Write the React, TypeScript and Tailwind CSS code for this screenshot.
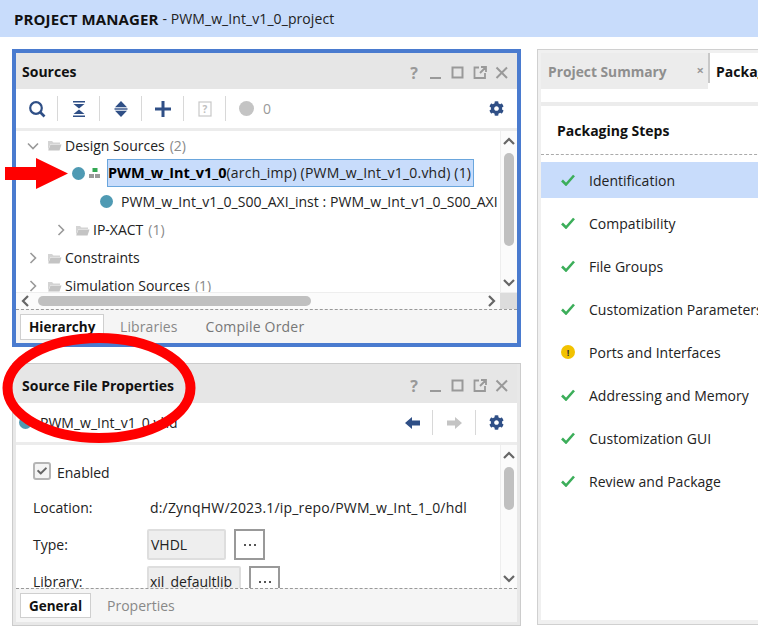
import React from "react";
import { FaCog } from "react-icons/fa";
import { FaCheck } from "react-icons/fa";

const font = { fontFamily: '"Open Sans","Noto Sans",sans-serif' };

function WindowButtons({ low }: { low?: boolean }) {
  return (
    <div className={`flex items-center gap-[4px] mr-[6px] ${low ? "mt-[5px]" : "mt-[3px]"}`}>
      <span className="w-[18px] text-center text-[16px] font-bold text-[#999] leading-none">?</span>
      <svg width="18" height="18" viewBox="0 0 18 18"><rect x="3" y="13" width="11" height="2" fill="#999" /></svg>
      <svg width="18" height="18" viewBox="0 0 18 18"><rect x="3.5" y="3.5" width="10" height="10" fill="none" stroke="#999" strokeWidth="2" /></svg>
      <svg width="18" height="18" viewBox="0 0 18 18"><path d="M8 3.5H3.5V14H14V9M10 3h5v5M15 3L9 9" fill="none" stroke="#999" strokeWidth="1.8" /></svg>
      <svg width="18" height="18" viewBox="0 0 18 18"><path d="M3.5 3.5L14 14M14 3.5L3.5 14" fill="none" stroke="#999" strokeWidth="2" /></svg>
    </div>
  );
}

function Sep() {
  return <div className="w-px h-[25px] bg-[#d8d8d8]" />;
}

function Cell({ children }: { children: React.ReactNode }) {
  return <div className="w-[41px] flex justify-center items-center h-[25px]">{children}</div>;
}

function Folder() {
  return (
    <svg width="15" height="13" viewBox="0 0 15 13" className="shrink-0">
      <path d="M1 2h4l1.5 1.5H13V5H3.5L1 11z" fill="#d4d4d4" />
      <path d="M3.5 5.5H14.5L12.5 11.5H1.2z" fill="#c4c4c4" />
    </svg>
  );
}

function Chevron({ down }: { down?: boolean }) {
  return (
    <svg width="12" height="12" viewBox="0 0 12 12" className="shrink-0">
      <path d={down ? "M1 3.5l5 5 5-5" : "M3.5 1l5 5-5 5"} fill="none" stroke="#999" strokeWidth="1.6" />
    </svg>
  );
}

function Row({ indent, down, label, count, h = 28 }: { indent: number; down?: boolean; label: string; count: string; h?: number }) {
  return (
    <div className="flex items-center shrink-0 whitespace-nowrap" style={{ paddingLeft: indent, height: h }}>
      <Chevron down={down} />
      <span className="ml-[8px] flex"><Folder /></span>
      <span className="ml-[3px] text-[#222]">{label}</span>
      <span className="ml-[5px] text-[#8a8a8a]">{count}</span>
    </div>
  );
}

function ScrollArrow({ dir }: { dir: "up" | "down" | "left" | "right" }) {
  const d = { up: "M2 9l5-5 5 5", down: "M2 5l5 5 5-5", left: "M9 2L4 7l5 5", right: "M5 2l5 5-5 5" }[dir];
  return (
    <svg width="14" height="14" viewBox="0 0 14 14" className="shrink-0">
      <path d={d} fill="none" stroke="#666" strokeWidth="2.2" />
    </svg>
  );
}

function VScroll({ thumbH, trackH }: { thumbH: number; trackH: number }) {
  return (
    <div className="w-[17px] shrink-0 border-l border-[#eeeeee] bg-[#fbfbfb] flex flex-col items-center" style={{ height: trackH }}>
      <div className="h-[21px] flex items-center"><ScrollArrow dir="up" /></div>
      <div className="flex-1 w-full flex flex-col items-center pt-[1px]">
        <div className="w-[10px] rounded-full bg-[#c0c0c0]" style={{ height: thumbH }} />
      </div>
      <div className="h-[21px] flex items-center"><ScrollArrow dir="down" /></div>
    </div>
  );
}

function Dot() {
  return <div className="w-[13px] h-[13px] rounded-full bg-[#4f9ab3] shrink-0" />;
}

function Dots() {
  return (
    <div className="w-[31px] h-[31px] border-2 border-[#999] flex items-center justify-center gap-[3px] shrink-0">
      <i className="w-[2px] h-[2px] bg-[#555]" />
      <i className="w-[2px] h-[2px] bg-[#555]" />
      <i className="w-[2px] h-[2px] bg-[#555]" />
    </div>
  );
}

function SourcesPanel() {
  return (
    <div className="h-[298px] border-[4px] border-[#4a7bcf] flex flex-col">
      <div className="h-[36px] bg-[#e6e6e6] flex items-center justify-between pl-[6px] shrink-0">
        <span className="font-bold text-[#111] text-[14px] pt-[1px]">Sources</span>
        <WindowButtons />
      </div>
      <div className="h-[39px] flex items-center shrink-0">
        <Cell>
          <svg width="18" height="18" viewBox="0 0 18 18"><circle cx="8" cy="8" r="5.8" fill="none" stroke="#2f4f86" strokeWidth="2.2" /><path d="M12 12l4.5 4.5" stroke="#2f4f86" strokeWidth="2.6" /></svg>
        </Cell>
        <Sep />
        <Cell>
          <svg width="14" height="16" viewBox="0 0 14 16"><path d="M1 0h12v1.4H1zM1.5 3h11L7 7.5zM1.5 13h11L7 8.5zM1 14.6h12V16H1z" fill="#2f4f86" /></svg>
        </Cell>
        <Sep />
        <Cell>
          <svg width="14" height="16" viewBox="0 0 14 16"><path d="M7 0l6 6.3H1zM7 16l6-6.3H1z" fill="#2f4f86" /><rect x="0.5" y="7.3" width="13" height="1.4" fill="#2f4f86" /></svg>
        </Cell>
        <Sep />
        <Cell>
          <svg width="16" height="16" viewBox="0 0 16 16"><path d="M6.5 0h3v6.5H16v3H9.5V16h-3V9.5H0v-3h6.5z" fill="#2f4f86" /></svg>
        </Cell>
        <Sep />
        <Cell>
          <svg width="14" height="16" viewBox="0 0 14 16"><rect x="1" y="1" width="12" height="14" fill="none" stroke="#c8c8c8" strokeWidth="1.2" /><text x="7" y="12" fontSize="10" fontWeight="700" textAnchor="middle" fill="#c0c0c0">?</text></svg>
        </Cell>
        <Sep />
        <Cell>
          <div className="w-[15px] h-[15px] rounded-full bg-[#c4c4c4]" />
        </Cell>
        <span className="text-[#999] -ml-[4px]">0</span>
        <div className="flex-1" />
        <div className="w-[41px] flex justify-center"><FaCog size={15} color="#2f4f86" /></div>
      </div>
      <div className="h-[3px] bg-[#ececec] shrink-0" />
      <div className="flex h-[161px] shrink-0">
        <div className="flex-1 min-w-0 overflow-hidden flex flex-col pt-[1px]">
          <Row indent={11} down label="Design Sources" count="(2)" h={27} />
          <div className="h-[28px] flex items-center shrink-0 whitespace-nowrap pl-[56px]">
            <Dot />
            <svg width="12" height="11" viewBox="0 0 12 11" className="ml-[4px] shrink-0">
              <rect x="3.5" y="0" width="5" height="4" fill="#34a853" />
              <rect x="0" y="6" width="5" height="4" fill="#9a9a9a" />
              <rect x="6" y="6" width="5" height="4" fill="#9a9a9a" />
            </svg>
            <div className="ml-[6px] h-[28px] border border-[#6aa6dd] bg-[#c8dcfb] flex items-center w-[367px] overflow-hidden">
              <span className="font-bold text-[#000] text-[14.5px]">PWM_w_Int_v1_0</span>
              <span className="text-[#222] tracking-[0.2px]">(arch_imp) (PWM_w_Int_v1_0.vhd) (1)</span>
            </div>
          </div>
          <div className="h-[29px] flex items-center shrink-0 whitespace-nowrap pl-[84px] overflow-hidden">
            <Dot />
            <span className="ml-[8px] text-[#222] tracking-[0.05px]">PWM_w_Int_v1_0_S00_AXI_inst : PWM_w_Int_v1_0_S00_AXI</span>
          </div>
          <Row indent={39} label="IP-XACT" count="(1)" />
          <Row indent={11} label="Constraints" count="" />
          <Row indent={11} label="Simulation Sources" count="(1)" />
        </div>
        <VScroll thumbH={93} trackH={161} />
      </div>
      <div className="h-[17px] shrink-0 flex items-center bg-[#fbfbfb] border-t border-[#eeeeee]">
        <div className="w-[19px] flex justify-center"><ScrollArrow dir="left" /></div>
        <div className="w-[273px] h-[10px] rounded-full bg-[#c0c0c0] ml-[3px]" />
        <div className="flex-1" />
        <div className="mr-[2px]"><ScrollArrow dir="right" /></div>
        <div className="w-[17px] h-full bg-[#dcdcdc]" />
      </div>
      <div className="flex-1 bg-[#f5f5f5] border-t border-dashed border-[#999] flex items-center pl-[4px]">
        <div className="h-[26px] w-[84px] pl-[8px] bg-white border border-[#cfcfcf] flex items-center font-bold text-[#111] text-[13.5px]">Hierarchy</div>
        <div className="ml-[16px] text-[#888] tracking-[0.1px]">Libraries</div>
        <div className="ml-[28px] text-[#777] tracking-[0.2px]">Compile Order</div>
      </div>
    </div>
  );
}

function PropertiesPanel() {
  return (
    <div className="h-[263px] border border-[#cccccc]">
      <div className="h-full border-[3px] border-t-0 border-[#e8e8e8] flex flex-col">
        <div className="h-[39px] bg-[#e6e6e6] flex items-center justify-between pl-[6px] shrink-0">
          <span className="font-bold text-[#111] text-[14px] pt-[4px]">Source File Properties</span>
          <WindowButtons low />
        </div>
        <div className="h-[39px] flex items-center shrink-0 pl-[3px]">
          <Dot />
          <span className="ml-[8px] text-[#222] whitespace-nowrap">PWM_w_Int_v1_0.vhd</span>
          <div className="flex-1" />
          <svg width="16" height="12" viewBox="0 0 16 12"><path d="M7 0v3.5h8v5H7V12L0 6z" fill="#2f4f86" /></svg>
          <div className="w-[11px]" />
          <Sep />
          <div className="w-[13px]" />
          <svg width="16" height="12" viewBox="0 0 16 12"><path d="M9 0v3.5H1v5h8V12l7-6z" fill="#c4c4c4" /></svg>
          <div className="w-[13px]" />
          <Sep />
          <div className="w-[13px]" />
          <FaCog size={15} color="#2f4f86" />
          <div className="w-[13px]" />
        </div>
        <div className="h-[3px] bg-[#ececec] shrink-0" />
        <div className="h-[143px] flex shrink-0">
          <div className="flex-1 min-w-0 overflow-hidden pl-[17px] flex flex-col">
            <div className="h-[18px] mt-[17px] flex items-center shrink-0">
              <div className="w-[18px] h-[18px] rounded-[3px] border-2 border-[#b5b5b5] bg-[#f4f4f4] flex items-center justify-center">
                <FaCheck size={10} color="#666" />
              </div>
              <span className="ml-[6px] text-[#222] pt-[3px]">Enabled</span>
            </div>
            <div className="mt-[18px] h-[20px] flex items-center shrink-0 whitespace-nowrap">
              <span className="w-[117px] text-[#222]">Location:</span>
              <span className="text-[#222] tracking-[0.18px]">d:/ZynqHW/2023.1/ip_repo/PWM_w_Int_1_0/hdl</span>
            </div>
            <div className="mt-[11px] h-[31px] flex items-center shrink-0">
              <span className="w-[114px] text-[#222]">Type:</span>
              <div className="w-[79px] h-[31px] bg-[#eeeeee] border-2 border-[#dedede] rounded-[2px] flex items-center pl-[2px] text-[#222]">VHDL</div>
              <div className="ml-[8px]"><Dots /></div>
            </div>
            <div className="mt-[6px] h-[31px] flex items-center shrink-0">
              <span className="w-[114px] text-[#222]">Library:</span>
              <div className="w-[94px] h-[31px] bg-[#eeeeee] border-2 border-[#dedede] rounded-[2px] flex items-center pl-[1px] text-[#222] whitespace-nowrap">xil_defaultlib</div>
              <div className="ml-[8px]"><Dots /></div>
            </div>
          </div>
          <VScroll thumbH={43} trackH={143} />
        </div>
        <div className="flex-1 bg-[#f5f5f5] border-t border-dashed border-[#999] flex items-center pl-[4px]">
          <div className="h-[25px] w-[71px] pl-[8px] bg-white border border-[#cfcfcf] flex items-center font-bold text-[#111] text-[13.5px]">General</div>
          <div className="ml-[16px] text-[#888]">Properties</div>
        </div>
      </div>
    </div>
  );
}

function Step({ label, active, warn }: { label: string; active?: boolean; warn?: boolean }) {
  return (
    <div className={`h-[36px] flex items-center whitespace-nowrap pl-[20px] pt-[2px] ${active ? "bg-[#c8dcfb]" : ""}`}>
      {warn ? (
        <div className="w-[14px] h-[14px] rounded-full bg-[#f2c200] flex items-center justify-center text-[9px] font-bold text-[#333] leading-none -mt-[2px]">!</div>
      ) : (
        <svg width="14" height="12" viewBox="0 0 14 12" className="-mt-[3px]"><path d="M1 6.5l4 4L13 1.5" fill="none" stroke="#3cae5a" strokeWidth="2.6" /></svg>
      )}
      <span className="ml-[14px] text-[#222] tracking-[0.02px]">{label}</span>
    </div>
  );
}

function RightPanel() {
  return (
    <div className="w-[230px] shrink-0 h-[576px] border-l border-t border-b border-[#d0d0d0] bg-[#f0f0f0] pl-[3px] pt-[3px] pb-[4px] flex flex-col overflow-hidden">
      <div className="h-[36px] flex shrink-0 bg-white">
        <div className="w-[167px] bg-[#ececec] flex items-center pl-[7px] pt-[2px] font-bold text-[#8f8f8f] text-[13.8px] whitespace-nowrap relative">
          Project Summary
          <span className="absolute right-[4px] top-[11px] text-[#999] text-[13px] leading-none">×</span>
        </div>
        <div className="w-[2px] bg-[#c8c8c8] h-[30px]" />
        <div className="flex-1 pl-[6px] pt-[2px] font-bold text-[#111] text-[14px] flex items-center whitespace-nowrap overflow-hidden">Packaging</div>
      </div>
      <div className="h-[13px] bg-white shrink-0" />
      <div className="h-[4px] bg-[#ececec] shrink-0" />
      <div className="flex-1 bg-white flex flex-col">
        <div className="h-[49px] flex items-center pl-[16px] pt-[2px] font-bold text-[#111] text-[14px] border-b border-dashed border-[#aaa] shrink-0">Packaging Steps</div>
        <div className="flex flex-col gap-[7px] pt-[7px]">
          <Step label="Identification" active />
          <Step label="Compatibility" />
          <Step label="File Groups" />
          <Step label="Customization Parameters" />
          <Step label="Ports and Interfaces" warn />
          <Step label="Addressing and Memory" />
          <Step label="Customization GUI" />
          <Step label="Review and Package" />
        </div>
      </div>
    </div>
  );
}

export default function App() {
  return (
    <div className="relative w-[758px] h-[639px] bg-white overflow-hidden text-[14px] leading-[20px]" style={font}>
      <div className="h-[37px] bg-[#c8dcfb] flex items-center pl-[14px] text-[#222]">
        <span className="font-bold text-[#111] text-[15px] tracking-[0.1px]">PROJECT MANAGER</span>
        <span className="ml-[4px] tracking-[0.08px]">- PWM_w_Int_v1_0_project</span>
      </div>
      <div className="flex pl-[12px] pt-[12px] gap-[16px]">
        <div className="w-[509px] shrink-0 flex flex-col gap-[16px]">
          <SourcesPanel />
          <PropertiesPanel />
        </div>
        <RightPanel />
      </div>
      {/* red annotations */}
      <svg className="absolute left-0 top-0 pointer-events-none" width="758" height="639" viewBox="0 0 758 639">
        <path d="M5 167H36V158L68 173.5L36 189V180H5z" fill="#ff0000" />
        <ellipse cx="99" cy="388" rx="91.5" ry="50" fill="none" stroke="#ff0000" strokeWidth="10" />
      </svg>
    </div>
  );
}
